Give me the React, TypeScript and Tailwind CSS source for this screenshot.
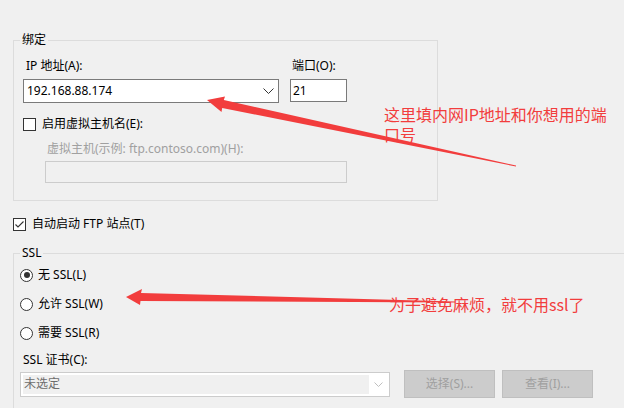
import React from 'react';

const Chevron = ({ color, w = 10 }: { color: string; w?: number }) => (
  <svg width={w + 1} height={w / 2 + 1} viewBox={`0 0 ${w + 1} ${w / 2 + 1}`}>
    <polyline points={`0.5,0.5 ${w / 2 + 0.5},${w / 2 + 0.5} ${w + 0.5},0.5`} fill="none" stroke={color} strokeWidth="1" />
  </svg>
);

const CheckBox = ({ checked }: { checked?: boolean }) => (
  <div className="w-[13px] h-[13px] border border-[#333333] bg-white flex items-center justify-center shrink-0">
    {checked && (
      <svg width="11" height="11" viewBox="0 0 11 11">
        <polyline points="1.5,5.5 4,8 9.5,2.5" fill="none" stroke="#333" strokeWidth="1.1" />
      </svg>
    )}
  </div>
);

const Radio = ({ checked }: { checked?: boolean }) => (
  <div className="w-[13px] h-[13px] rounded-full border border-[#333333] bg-white flex items-center justify-center shrink-0">
    {checked && <div className="w-[6px] h-[6px] rounded-full bg-[#333333]" />}
  </div>
);

const App: React.FC = () => {
  return (
    <div className="relative w-[624px] h-[408px] overflow-hidden bg-[#f0f0f0] text-[12px] leading-[16px] text-black font-['Noto_Sans','Noto_Sans_CJK_SC',sans-serif]">
      <div className="pt-[32px] pl-[13px]">
        {/* 绑定 */}
        <fieldset className="w-[425px] border border-[#dcdcdc] p-0 pb-[17px] m-0">
          <legend className="ml-[6px] px-[2px] leading-[16px]">绑定</legend>
          <div className="flex ml-[9px] mt-[10px]">
            <div className="w-[256px]">
              <div className="pl-[3px]">IP 地址(A):</div>
              <div className="mt-[5px] h-[24px] border border-[#7a7a7a] bg-white flex items-center justify-between pl-[3px] pr-[4px]">
                <span>192.168.88.174</span>
                <Chevron color="#333333" />
              </div>
            </div>
            <div className="ml-[11px] w-[57px]">
              <div className="pl-[2px]">端口(O):</div>
              <div className="mt-[5px] h-[23px] border border-[#7a7a7a] bg-white flex items-center pl-[2px]">21</div>
            </div>
          </div>
          <div className="flex items-center ml-[9px] mt-[13px] gap-[6px]">
            <CheckBox />
            <span>启用虚拟主机名(E):</span>
          </div>
          <div className="ml-[33px] mt-[9px] text-[#a0a0a0]">虚拟主机(示例: ftp.contoso.com)(H):</div>
          <div className="ml-[31px] mt-[4px] w-[302px] h-[22px] border border-[#cccccc] bg-[#f0f0f0]" />
        </fieldset>

        <div className="flex items-center mt-[15px] gap-[6px]">
          <CheckBox checked />
          <span>自动启动 FTP 站点(T)</span>
        </div>

        {/* SSL */}
        <fieldset className="w-[700px] h-[200px] border border-[#dcdcdc] p-0 m-0 mt-[13px]">
          <legend className="ml-[6px] px-[2px] leading-[16px]">SSL</legend>
          <div className="flex items-center ml-[6px] mt-[6px] gap-[5px]">
            <Radio checked />
            <span>无 SSL(L)</span>
          </div>
          <div className="flex items-center ml-[6px] mt-[13px] gap-[5px]">
            <Radio />
            <span>允许 SSL(W)</span>
          </div>
          <div className="flex items-center ml-[6px] mt-[13px] gap-[5px]">
            <Radio />
            <span>需要 SSL(R)</span>
          </div>
          <div className="ml-[9px] mt-[11px]">SSL 证书(C):</div>
          <div className="flex items-center ml-[6px] mt-[2px]">
            <div className="w-[370px] h-[25px] border border-[#cccccc] bg-white p-[2px] flex items-stretch">
              <div className="flex-1 bg-[#f0f0f0] flex items-center pl-[1px] text-[#6d6d6d]">未选定</div>
              <div className="w-[18px] flex items-center justify-center">
                <Chevron color="#bfbfbf" w={8} />
              </div>
            </div>
            <button className="ml-[14px] w-[91px] h-[28px] bg-[#cccccc] border border-[#bfbfbf] text-[#a0a0a0]">选择(S)...</button>
            <button className="ml-[7px] w-[91px] h-[28px] bg-[#cccccc] border border-[#bfbfbf] text-[#a0a0a0]">查看(I)...</button>
          </div>
        </fieldset>
      </div>

      {/* annotations */}
      <svg className="absolute inset-0 pointer-events-none" width="624" height="408" viewBox="0 0 624 408">
        <polygon
          fill="#f23d3d"
          points="207,100 225,96.5 223.8,100.1 516,165.5 516,166.5 222.2,107.9 221.5,112"
        />
        <polygon
          fill="#f23d3d"
          points="126,297 142,289 141,293 455,301.5 455,302.5 140.5,301 140,305"
        />
      </svg>
      <div className="absolute left-[384px] top-[104px] text-[16px] leading-[20px] text-[#f23d3d] font-['Noto_Sans_CJK_SC',sans-serif] whitespace-nowrap">
        这里填内网IP地址和你想用的端
        <br />
        口号
      </div>
      <div className="absolute left-[389px] top-[294px] text-[16px] leading-[20px] text-[#f23d3d] font-['Noto_Sans_CJK_SC',sans-serif] whitespace-nowrap">
        为子避免麻烦，就不用ssl了
      </div>
    </div>
  );
};

export default App;
